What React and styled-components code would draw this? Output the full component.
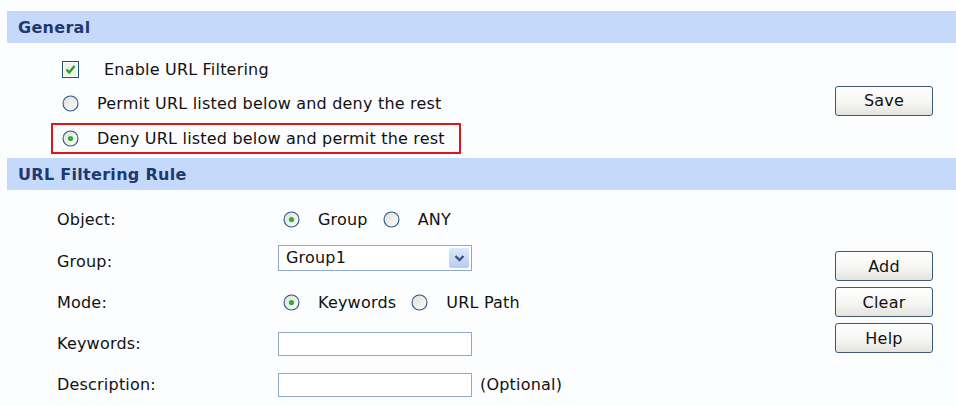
import React from 'react'
import styled, { createGlobalStyle } from 'styled-components'

const GlobalStyle = createGlobalStyle`
  body {
    margin: 0;
    background: #fcfdff;
    font-family: 'DejaVu Sans', Verdana, sans-serif;
    color: #111;
  }
`

const Page = styled.div`
  width: 956px;
  height: 406px;
  padding: 11px 0 0 7px;
  box-sizing: border-box;
  overflow: hidden;
`

const SectionHeader = styled.div`
  height: 32px;
  background: #c5dafb;
  color: #1f3870;
  font-weight: bold;
  font-size: 16px;
  letter-spacing: 0.3px;
  display: flex;
  align-items: center;
  padding-left: 11px;
`

const GeneralBody = styled.div`
  height: 115px;
  display: flex;
  align-items: flex-start;
  padding-right: 23px;
`

const OptionList = styled.div`
  display: flex;
  flex-direction: column;
  gap: 3.5px;
  padding: 10.5px 0 0 44px;
`

const OptionRow = styled.div`
  width: 410px;
  height: 31px;
  box-sizing: border-box;
  border: 2px solid ${p => (p.$highlight ? '#e2141b' : 'transparent')};
  display: flex;
  align-items: center;
  padding-left: 9px;
  gap: ${p => (p.$wide ? '25px' : '18px')};
  font-size: 16px;
  letter-spacing: 0.2px;
`

const RuleBody = styled.div`
  display: flex;
  padding-right: 23px;
`

const FieldGrid = styled.div`
  display: grid;
  grid-template-columns: 221px auto;
  grid-template-rows: 42px 42px repeat(3, 41px);
  align-items: center;
  padding: 8px 0 0 50px;
  font-size: 16px;
  letter-spacing: 0.2px;
`

const Label = styled.div``

const ControlCell = styled.div`
  display: flex;
  align-items: center;
  margin-top: ${p => p.$shift || 0}px;
`

const RadioChoice = styled.label`
  display: flex;
  align-items: center;
  gap: 18px;
  margin-left: 5px;
  margin-right: 10px;
`

const TextBox = styled.div`
  width: 194px;
  height: 24px;
  box-sizing: border-box;
  border: 1px solid #8fa9c8;
  background: #fff;
`

const SelectBox = styled.div`
  width: 194px;
  height: 26px;
  box-sizing: border-box;
  border: 1px solid #8fa9c8;
  background: #fff;
  display: flex;
  align-items: center;
  justify-content: space-between;
  padding: 0 2px 0 7px;
`

const DropButton = styled.div`
  width: 20px;
  height: 20px;
  border-radius: 2px;
  background: linear-gradient(#dce8fc, #b4cbf4);
  display: flex;
  align-items: center;
  justify-content: center;
`

const Hint = styled.span`
  margin-left: 8px;
`

const ButtonStack = styled.div`
  display: flex;
  flex-direction: column;
  gap: 6px;
  margin-left: auto;
  margin-top: ${p => p.$top || 0}px;
  align-self: ${p => (p.$center ? 'center' : 'flex-start')};
`

const Button = styled.button`
  width: 98px;
  height: 30px;
  border: 1px solid #3d5878;
  border-radius: 3px;
  background: linear-gradient(#ffffff, #f4f4f1 60%, #e4e3dc);
  font-family: inherit;
  font-size: 16px;
  letter-spacing: 0.2px;
  color: #111;
  padding: 0;
`

const Checkbox = ({ checked }) => (
  <svg width="17" height="17" viewBox="0 0 17 17">
    <rect x="0.5" y="0.5" width="16" height="16" fill="#fff" stroke="#1d4f7f" />
    <rect x="2" y="2" width="13" height="13" fill="#f1f1ec" />
    {checked && (
      <path d="M4.5 8.5 L7.2 11.5 L12.5 5" fill="none" stroke="#21a121" strokeWidth="2.2" />
    )}
  </svg>
)

const Radio = ({ checked }) => (
  <svg width="17" height="17" viewBox="0 0 17 17">
    <defs>
      <linearGradient id="rg" x1="0" y1="0" x2="1" y2="1">
        <stop offset="0" stopColor="#dcdcd6" />
        <stop offset="1" stopColor="#ffffff" />
      </linearGradient>
    </defs>
    <circle cx="8.5" cy="8.5" r="7.5" fill="url(#rg)" stroke="#2d5a8a" strokeWidth="1.1" />
    {checked && <circle cx="8.5" cy="8.5" r="2.6" fill="#30b030" />}
  </svg>
)

const Chevron = () => (
  <svg width="11" height="8" viewBox="0 0 11 8">
    <path d="M1.5 2 L5.5 6 L9.5 2" fill="none" stroke="#3f5478" strokeWidth="2.4" />
  </svg>
)

export default function App() {
  return (
    <Page>
      <GlobalStyle />
      <SectionHeader>General</SectionHeader>
      <GeneralBody>
        <OptionList>
          <OptionRow $wide>
            <Checkbox checked />
            <span>Enable URL Filtering</span>
          </OptionRow>
          <OptionRow>
            <Radio />
            <span>Permit URL listed below and deny the rest</span>
          </OptionRow>
          <OptionRow $highlight>
            <Radio checked />
            <span>Deny URL listed below and permit the rest</span>
          </OptionRow>
        </OptionList>
        <ButtonStack $center>
          <Button>Save</Button>
        </ButtonStack>
      </GeneralBody>
      <SectionHeader>URL Filtering Rule</SectionHeader>
      <RuleBody>
        <FieldGrid>
          <Label>Object:</Label>
          <ControlCell>
            <RadioChoice><Radio checked />Group</RadioChoice>
            <RadioChoice><Radio />ANY</RadioChoice>
          </ControlCell>
          <Label>Group:</Label>
          <ControlCell $shift={-7}>
            <SelectBox>
              <span>Group1</span>
              <DropButton><Chevron /></DropButton>
            </SelectBox>
          </ControlCell>
          <Label>Mode:</Label>
          <ControlCell>
            <RadioChoice><Radio checked />Keywords</RadioChoice>
            <RadioChoice><Radio />URL Path</RadioChoice>
          </ControlCell>
          <Label>Keywords:</Label>
          <ControlCell>
            <TextBox />
          </ControlCell>
          <Label>Description:</Label>
          <ControlCell>
            <TextBox />
            <Hint>(Optional)</Hint>
          </ControlCell>
        </FieldGrid>
        <ButtonStack $top={61}>
          <Button>Add</Button>
          <Button>Clear</Button>
          <Button>Help</Button>
        </ButtonStack>
      </RuleBody>
    </Page>
  )
}
